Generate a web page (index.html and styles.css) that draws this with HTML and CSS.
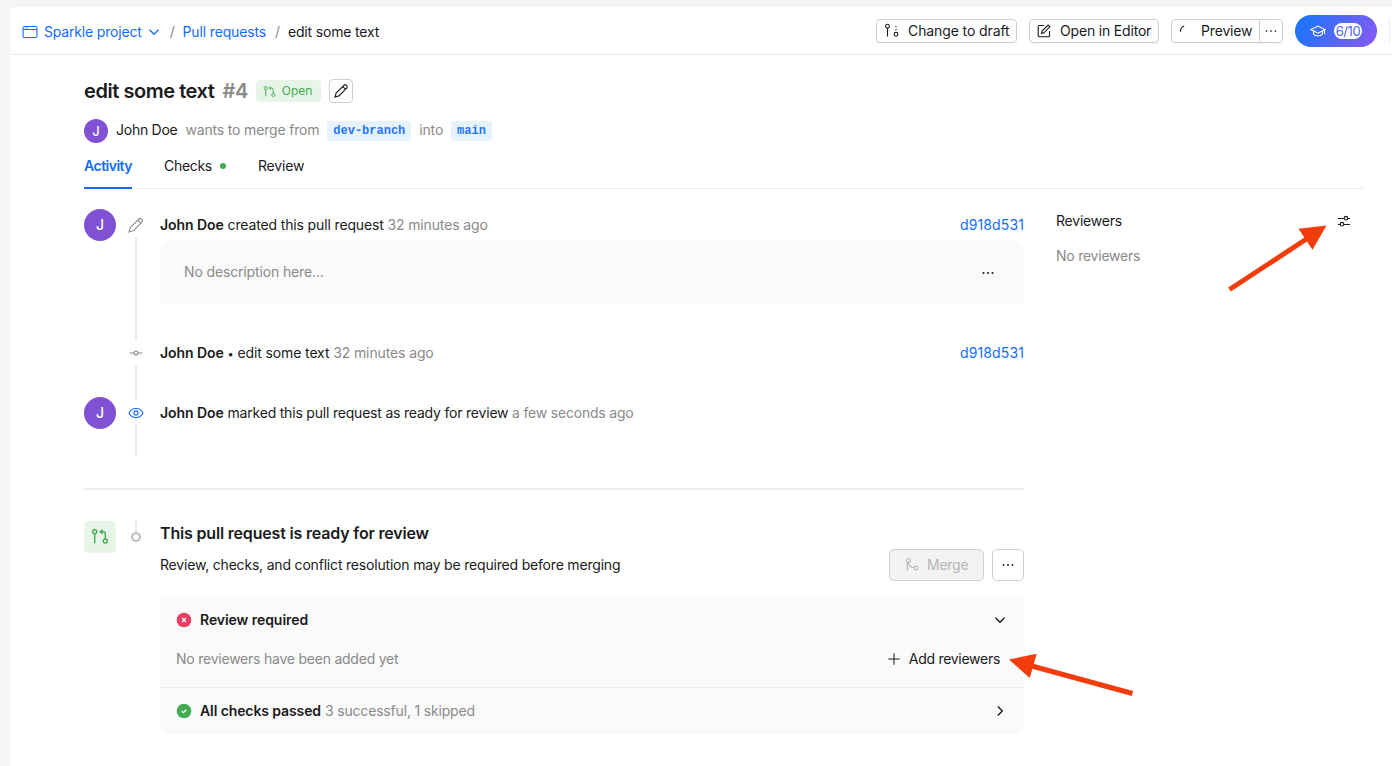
FILE: index.html
```html
<!DOCTYPE html>
<html lang="en">
<head>
<meta charset="utf-8">
<title>edit some text</title>
<link rel="stylesheet" href="styles.css">
</head>
<body>
<div class="app">
  <header class="topbar">
    <nav class="crumbs">
      <a class="project">
        <svg class="icon" viewBox="0 0 16 16"><rect x="1" y="2.5" width="14" height="11" rx="1.4"/><path d="M1 5.5h14M3.2 4h1M5.2 4h1"/></svg>
        <span>Sparkle project</span>
        <svg class="caret" viewBox="0 0 12 12"><path d="M1.5 3.8 6 8.3l4.5-4.5"/></svg>
      </a>
      <span class="sep">/</span><a class="pulls">Pull requests</a><span class="sep">/</span><span class="here">edit some text</span>
    </nav>
    <div class="actions">
      <button class="btn draft"><svg class="icon" viewBox="0 0 16 16"><circle cx="3.5" cy="3.2" r="1.9"/><path d="M3.5 5.2v8.3"/><circle cx="12" cy="11.3" r="1.9"/><path d="M12 3v6" stroke-dasharray="1.3 1.7"/></svg><span>Change to draft</span></button>
      <button class="btn editor"><svg class="icon" viewBox="0 0 16 16"><path d="M8 2.5H3.2a1 1 0 0 0-1 1v9.3a1 1 0 0 0 1 1h9.3a1 1 0 0 0 1-1V8"/><path d="m5.6 10.4.5-2.4 6-6 1.8 1.8-6 6z"/></svg><span>Open in Editor</span></button>
      <div class="split">
        <button class="preview"><svg class="icon" viewBox="0 0 16 16"><path d="M2.5 8.8A5.8 5.8 0 0 1 6.2 3"/></svg><span>Preview</span></button>
        <button class="more"><svg class="dots" viewBox="0 0 12 4"><circle cx="1.5" cy="2" r=".85"/><circle cx="6" cy="2" r=".85"/><circle cx="10.5" cy="2" r=".85"/></svg></button>
      </div>
      <button class="progress"><svg class="icon" viewBox="0 0 16 16"><path d="M1 6.6 8 3l7 3.6-7 3.6zM3.5 8v3.1c2.4 2.3 6.600 2.3 9 0V8M14.6 7v4"/></svg><span>6/10</span></button>
      <i class="edge"></i>
    </div>
  </header>

  <main class="page">
    <div class="title-row">
      <h1>edit some text</h1><span class="number">#4</span>
      <span class="status"><svg viewBox="0 0 16 16"><circle cx="3.4" cy="3.8" r="2"/><path d="M3.4 5.8V14"/><circle cx="12.8" cy="12" r="2"/><path d="M7.8 3.8h2.7a2 2 0 0 1 2 2V10M9.8 1.8l-2 2 2 2"/></svg><span>Open</span></span>
      <button class="edit"><svg class="icon" viewBox="0 0 16 16"><path d="m2 14 1.1-4 7.8-7.7a1.7 1.7 0 0 1 2.4 0l.4.4a1.7 1.7 0 0 1 0 2.4L5.9 12.900zM9.700 3.500l2.800 2.800"/></svg></button>
    </div>
    <div class="merge-row">
      <span class="avatar small">J</span><span class="author">John Doe</span><span class="muted wants">wants to merge from</span><code class="branch">dev-branch</code><span class="muted into">into</span><code class="branch">main</code>
    </div>
    <nav class="tabs"><a class="active">Activity</a><a>Checks<i class="dot"></i></a><a>Review</a></nav>

    <div class="columns">
      <section class="feed">
        <article class="event created">
          <span class="avatar">J</span>
          <div class="rail"><svg class="icon" viewBox="0 0 16 16"><path d="m1 15 1.200-4.300L10.900 2a1.800 1.800 0 0 1 2.500 0l.6.600a1.800 1.800 0 0 1 0 2.500l-8.700 8.700zM9.700 3.200l3.100 3.100"/></svg><i></i></div>
          <div class="body">
            <div class="line"><p><b>John Doe</b> created this pull request <span class="muted">32 minutes ago</span></p><a>d918d531</a></div>
            <div class="description"><span>No description here...</span><svg class="dots" viewBox="0 0 12 4"><circle cx="1.5" cy="2" r="1"/><circle cx="6" cy="2" r="1"/><circle cx="10.5" cy="2" r="1"/></svg></div>
          </div>
        </article>
        <article class="event commit">
          <span></span>
          <div class="rail"><svg class="icon" viewBox="0 0 16 16"><circle cx="8" cy="8" r="2"/><path d="M1.500 8H6M10 8h4.500"/></svg><i></i></div>
          <div class="body"><div class="line"><p><b>John Doe</b> <span class="bullet">•</span> edit some text <span class="muted">32 minutes ago</span></p><a>d918d531</a></div></div>
        </article>
        <article class="event ready">
          <span class="avatar">J</span>
          <div class="rail blue"><svg class="icon" viewBox="0 0 16 16"><path d="M1 8c3.100-6.100 10.900-6.100 14 0-3.100 6.100-10.900 6.100-14 0z"/><circle cx="8" cy="8" r="2.100"/></svg><i></i></div>
          <div class="body"><div class="line"><p><b>John Doe</b> marked this pull request as ready for review <span class="muted">a few seconds ago</span></p></div></div>
        </article>

        <div class="merge-box">
          <span class="square"><svg viewBox="0 0 18 18"><circle cx="3.700" cy="3.800" r="2"/><path d="M3.700 5.800V15"/><circle cx="14.300" cy="13" r="2"/><path d="M9.300 3.800h3a2 2 0 0 1 2 2V11M11.500 1.600 9.300 3.800l2.200 2.200"/></svg></span>
          <div class="stem"><i></i><b></b></div>
          <div class="body">
            <h2>This pull request is ready for review</h2>
            <div class="summary"><p>Review, checks, and conflict resolution may be required before merging</p>
              <button class="merge"><svg class="icon" viewBox="0 0 16 16"><circle cx="4.400" cy="3.700" r="1.900"/><path d="M3.400 5.500v8M4 5.700c.8 3 2.700 4.700 6 5"/><circle cx="12" cy="11" r="1.900"/></svg><span>Merge</span></button>
              <button class="merge-more"><svg class="dots" viewBox="0 0 12 4"><circle cx="1.500" cy="2" r=".9"/><circle cx="6" cy="2" r=".9"/><circle cx="10.500" cy="2" r=".9"/></svg></button>
            </div>
            <div class="checks">
              <div class="check"><svg class="badge" viewBox="0 0 16 16"><circle class="red" cx="8" cy="8" r="7.300"/><path d="m6 6 4 4m0-4-4 4"/></svg><b>Review required</b><svg class="caret" viewBox="0 0 12 12"><path d="M1.500 3.800 6 8.300l4.500-4.500"/></svg></div>
              <div class="reviewers-row"><span class="muted">No reviewers have been added yet</span><button><svg class="plus" viewBox="0 0 12 12"><path d="M6 .300v11.400M.300 6h11.400"/></svg><span>Add reviewers</span></button></div>
              <div class="check passed"><svg class="badge" viewBox="0 0 16 16"><circle class="green" cx="8" cy="8" r="7.300"/><path d="m5.800 8.200 1.600 1.500 3-3"/></svg><b>All checks passed</b><span class="muted">3 successful, 1 skipped</span><svg class="caret" viewBox="0 0 12 12"><path d="M3.800 1.500 8.300 6l-4.500 4.500"/></svg></div>
            </div>
          </div>
        </div>
      </section>
      <aside class="side">
        <div class="side-head"><span>Reviewers</span><svg class="icon" viewBox="0 0 16 16"><path d="M2 5.500h6M12 5.500h2M2 11.500h2M8 11.500h6"/><circle cx="10" cy="5.200" r="1.800"/><circle cx="6" cy="11.200" r="1.800"/></svg></div>
        <p class="muted">No reviewers</p>
      </aside>
    </div>
  </main>
</div>
<svg class="arrows" viewBox="0 0 1392 766"><path d="M1229.500 289.500 1308 238M1132.500 693.500 1030 665.500"/><path class="head" d="m1326.500 225.500-28 3.200 14 21zM1009 659.500l27.700-5.700-7 24.200z"/></svg>
</body>
</html>
```
FILE: styles.css
```css
* { box-sizing: border-box; }
body { margin: 0; height: 766px; overflow: hidden; padding: 7px 0 0 10px; background: #f5f5f5; color: #1a1b1d; font: 14px/20px Inter, "Liberation Sans", sans-serif; letter-spacing: -.18px; }
h1, h2, p { margin: 0; }
button { font: inherit; letter-spacing: -.1px; color: inherit; background: #fff; border: 0; padding: 0; white-space: nowrap; display: flex; align-items: center; }
a { color: #146cf8; }
b, h2 { font-weight: 600; }
b { letter-spacing: -.06px; }
svg { fill: none; stroke: currentColor; flex: none; display: block; }
.icon { width: 16px; height: 16px; stroke-width: 1.1; }
.caret { width: 12px; height: 12px; stroke-width: 1.3; }
.dots { width: 12px; height: 4px; fill: currentColor; stroke: none; }
.muted { color: #8a8a8a; }

/* Top bar */
.app { height: 759px; background: #fff; border-top-left-radius: 6px; }
.topbar { height: 48px; border-bottom: 1px solid #ebebeb; display: flex; justify-content: space-between; padding-left: 12px; }
.crumbs { display: flex; align-items: center; padding-top: 2px; white-space: nowrap; }
.project { display: flex; align-items: center; }
.project span { margin: 0 6px; }
.sep { color: #8a8a8a; margin: 0 8px 0 9px; }
.sep:first-of-type { margin-left: 10px; }
.pulls { letter-spacing: -.14px; }
.actions { display: flex; align-items: center; height: 48px; }
.btn, .split { height: 24px; border: 1px solid #d0d0d0; border-radius: 4px; margin-right: 12px; box-shadow: 0 1px 1px #0000000a; }
.btn { padding-left: 7px; gap: 8px; }
.draft { width: 141px; }
.editor { width: 130px; padding-left: 6px; letter-spacing: -.18px; }
.split { width: 112px; display: flex; }
.preview { width: 88px; border-right: 1px solid #d0d0d0; padding-left: 6px; gap: 7px; border-radius: 4px 0 0 4px; letter-spacing: -.16px; }
.more { flex: 1; justify-content: center; border-radius: 0 4px 4px 0; }
.progress { width: 82px; height: 32px; border-radius: 16px; color: #fff; background: linear-gradient(120deg, #1f74fa 10%, #855af3 95%); padding-left: 15px; gap: 8px; margin-right: 12px; }
.progress span { background: #fff; color: #4a68ef; border-radius: 8px; height: 16px; font-size: 13px; line-height: 16px; width: 28px; text-align: center; letter-spacing: -.4px; }
.edge { width: 3px; height: 24px; border-left: 1px solid #ebebeb; }

/* Pull request heading */
.page { padding: 24px 28px 0 74px; }
.title-row { display: flex; align-items: center; height: 24px; }
h1 { font-size: 20px; line-height: 24px; font-weight: 600; letter-spacing: -.45px; }
.number { font-size: 20px; font-weight: 600; color: #8a8a8a; margin-left: 8px; letter-spacing: -.4px; }
.status { display: flex; align-items: center; gap: 6px; height: 22px; width: 65px; margin-left: 8px; padding-left: 7px; border-radius: 4px; background: #e7f5e8; color: #43ac52; font-size: 12px; letter-spacing: 0; }
.status svg { width: 13px; height: 13px; stroke-width: 1.2; }
.edit { width: 24px; height: 24px; margin-left: 8px; border: 1px solid #d0d0d0; border-radius: 4px; justify-content: center; }
.avatar { width: 32px; height: 32px; border-radius: 50%; background: #8052d3; color: #fff; display: flex; align-items: center; justify-content: center; font-weight: 500; }
.avatar.small { width: 24px; height: 24px; font-size: 13px; }
.merge-row { display: flex; align-items: center; height: 24px; margin-top: 16px; }
.author, .wants, .into { margin-left: 8px; padding-bottom: 2px; }
.author { letter-spacing: -.25px; }
.branch { font: bold 12px/20px "Liberation Mono", monospace; letter-spacing: 0; background: #e6f3ff; color: #2575f5; border-radius: 3px; height: 20px; padding: 0 6px; margin-left: 8px; }
.tabs { display: flex; gap: 32px; height: 46px; border-bottom: 1px solid #ebebeb; }
.tabs a { height: 46px; padding-top: 13px; color: #1a1b1d; display: flex; }
.tabs .active { width: 48px; color: #146cf8; font-weight: 600; letter-spacing: -.5px; border-bottom: 2px solid #146cf8; }
.tabs a:nth-child(2) { letter-spacing: -.3px; }
.dot { width: 6px; height: 6px; margin: 7px 0 0 8px; border-radius: 50%; background: #43ac52; }

/* Activity feed */
.columns { display: grid; grid-template-columns: 940px 308px; gap: 32px; padding-top: 20px; }
.event, .merge-box { display: grid; grid-template-columns: 44px 32px 864px; }
.created { height: 128px; letter-spacing: -.14px; }
.commit { height: 60px; letter-spacing: -.12px; }
.ready { height: 60px; letter-spacing: -.2px; }
.line { height: 32px; display: flex; align-items: center; justify-content: space-between; white-space: nowrap; }
.line a { letter-spacing: .12px; }
.bullet { font-size: 11px; }
.rail { width: 16px; display: flex; flex-direction: column; align-items: center; color: #8a8a8a; padding-top: 8px; }
.rail i { width: 2px; flex: 1; margin: 4px 0 -4px; background: #ededed; }
.rail.blue { color: #146cf8; }
.description { height: 64px; border-radius: 8px; background: #fafafa; padding: 0 30px 2px 24px; color: #8a8a8a; display: flex; align-items: center; justify-content: space-between; }
.description .dots { color: #1a1b1d; margin-top: 2px; }
.ready .rail i { margin-bottom: 1px; }

/* Merge panel */
.merge-box { margin-top: 31px; border-top: 2px solid #ededed; padding-top: 31px; }
.square { width: 32px; height: 32px; border-radius: 5px; background: #e7f5e8; color: #43ac52; display: flex; align-items: center; justify-content: center; }
.square svg { width: 18px; height: 18px; stroke-width: 1.4; }
.stem { width: 16px; display: flex; flex-direction: column; align-items: center; }
.stem i { width: 2px; height: 11px; background: #ededed; }
.stem b { width: 10px; height: 10px; border: 2px solid #bdbdbd; border-radius: 50%; }
h2 { font-size: 16px; line-height: 24px; }
.summary { display: flex; align-items: center; height: 32px; margin-top: 4px; white-space: nowrap; letter-spacing: -.19px; }
.merge { width: 95px; height: 32px; margin-left: auto; padding-left: 14px; gap: 7px; background: #f3f3f3; border: 1px solid #d0d0d0; border-radius: 5px; color: #b5b5b5; letter-spacing: -.25px; }
.merge-more { width: 32px; height: 32px; margin-left: 8px; border: 1px solid #d0d0d0; border-radius: 5px; justify-content: center; }
.checks { margin-top: 16px; height: 137px; border-radius: 8px; background: #fafafa; letter-spacing: -.18px; }
.check { display: flex; align-items: center; height: 46px; padding: 0 18px 0 16px; }
.check b { margin: 0 4px 0 8px; }
.passed b { letter-spacing: -.1px; }
.check .caret { margin-left: auto; stroke-width: 1.4; }
.badge { width: 16px; height: 16px; stroke: #fff; stroke-width: 1.3; }
.badge circle { stroke: none; }
.red { fill: #e93f62; }
.green { fill: #43ac52; }
.reviewers-row { display: flex; align-items: center; justify-content: space-between; height: 45px; padding: 0 24px 13px 16px; border-bottom: 1px solid #ebebeb; letter-spacing: -.23px; }
.reviewers-row button { background: none; gap: 9px; letter-spacing: -.28px; }
.plus { width: 12px; height: 12px; }

/* Reviewers sidebar */
.side-head { display: flex; justify-content: space-between; align-items: center; height: 24px; padding-right: 12px; letter-spacing: -.22px; }
.side p { margin-top: 13px; letter-spacing: -.24px; }

.arrows { position: absolute; left: 0; top: 0; width: 1392px; height: 766px; stroke: #f23c0b; stroke-width: 5; pointer-events: none; }
.arrows .head { fill: #f23c0b; stroke: none; }
```
